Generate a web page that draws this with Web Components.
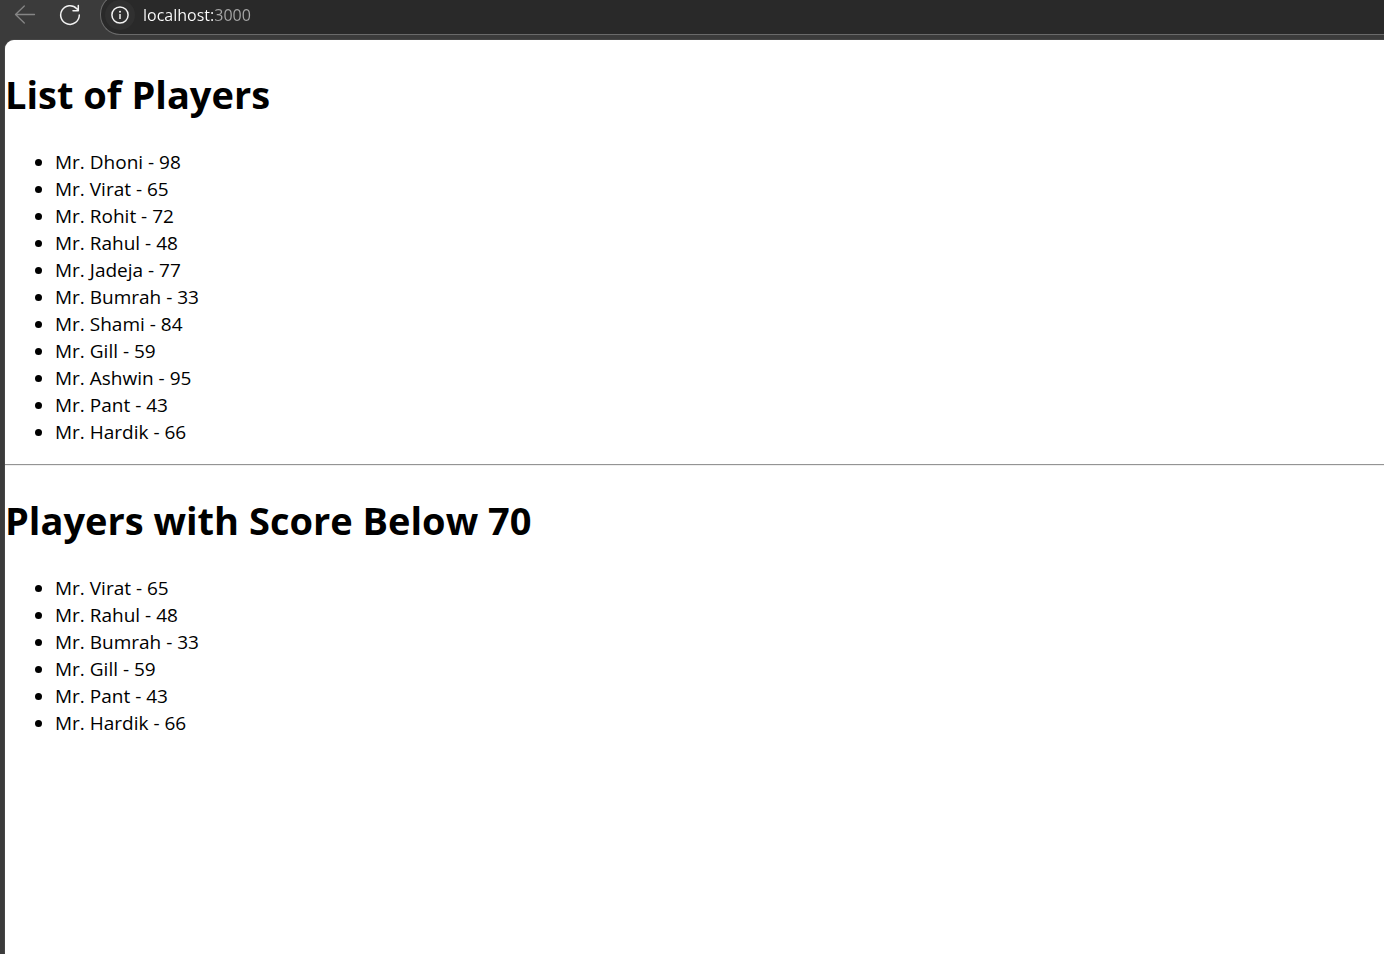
<!DOCTYPE html>
<html lang="en">
<head>
<meta charset="utf-8">
<title>List of Players</title>
<style>
  body { margin: 0; background: #3b3b3b; font-family: "Segoe UI", "Open Sans", "Noto Sans", sans-serif; }
</style>
</head>
<body>
<browser-window>
  <browser-toolbar slot="toolbar"></browser-toolbar>
  <player-list heading="List of Players"></player-list>
  <section-rule></section-rule>
  <player-list heading="Players with Score Below 70" below="70"></player-list>
</browser-window>
<script>
const players = [
  ["Dhoni", 98], ["Virat", 65], ["Rohit", 72], ["Rahul", 48], ["Jadeja", 77], ["Bumrah", 33],
  ["Shami", 84], ["Gill", 59], ["Ashwin", 95], ["Pant", 43], ["Hardik", 66]
];

customElements.define("browser-window", class extends HTMLElement {
  constructor() {
    super();
    this.attachShadow({ mode: "open" }).innerHTML = `
      <style>
        :host { display: flex; flex-direction: column; min-height: 100vh; }
        main { flex: 1; display: flow-root; margin-left: 5px; background: #fff; color: #000;
               border-top-left-radius: 9px; box-shadow: 0 0 1px #aaa; }
      </style>
      <slot name="toolbar"></slot>
      <main><slot></slot></main>`;
  }
});

customElements.define("browser-toolbar", class extends HTMLElement {
  constructor() {
    super();
    this.attachShadow({ mode: "open" }).innerHTML = `
      <style>
        :host { display: flex; height: 40px; overflow: hidden; align-items: flex-start; }
        button { display: grid; place-items: center; flex: none; width: 30px; height: 30px; padding: 0;
                 border: 0; border-radius: 6px; background: none; color: #f2f2f2; }
        button:disabled { color: #858585; }
        nav { display: flex; gap: 15px; padding-left: 10px; }
        svg { display: block; fill: none; stroke: currentColor; }
        form { box-sizing: border-box; display: flex; flex: 1; align-items: center; height: 41px; margin: -6px 0 0 15px;
               padding-left: 4px; border: 1px solid #6a6a6a; border-right: 0;
               border-radius: 20px 0 0 20px; background: #292929; }
        form button { border-radius: 50%; background: #303030; }
        /* The host name is white and the port after it is dimmed. */
        input { flex: 1; min-width: 0; height: 28px; margin: 0; padding: 0 0 0 8px; border: 0; outline: 0;
                font-family: inherit; font-size: 16px;
                background: linear-gradient(90deg, #fff 78px, #a8a8a8 78px);
                -webkit-background-clip: text; background-clip: text; color: #fff;
                -webkit-text-fill-color: transparent; }
      </style>
      <nav aria-label="Navigation">
        <button type="button" aria-label="Back" disabled>
          <svg width="22" height="22" viewBox="0 0 22 22" stroke-width="1.3" stroke-linecap="round" stroke-linejoin="round"><path d="M20.5 10.5H1.5M10.3 2L1.5 10.5L10.3 19"/></svg>
        </button>
        <button type="button" aria-label="Refresh">
          <svg width="22" height="22" viewBox="0 0 22 22" stroke-width="1.5" stroke-linecap="round" stroke-linejoin="round"><path d="M20.3 11A9.3 9.3 0 1 1 17.8 4.7L19.3 6.3M19.3 1.5V6.8H14"/></svg>
        </button>
      </nav>
      <form>
        <button type="button" aria-label="Site information">
          <svg width="18" height="18" viewBox="0 0 18 18" stroke-width="1.5"><circle cx="9" cy="9" r="8.1"/><path d="M9 8V13"/><circle cx="9" cy="5.7" r="1" fill="currentColor" stroke="none"/></svg>
        </button>
        <input type="text" aria-label="Address" value="localhost:3000" spellcheck="false">
      </form>`;
  }
});

customElements.define("section-rule", class extends HTMLElement {
  constructor() {
    super();
    this.attachShadow({ mode: "open" }).innerHTML = `
      <style>
        :host { display: block; }
        hr { margin: 0; border: 0; border-top: 1px solid #949494; border-bottom: 1px solid #efefef; }
      </style>
      <hr>`;
  }
});

customElements.define("player-list", class extends HTMLElement {
  connectedCallback() {
    const limit = Number(this.getAttribute("below") || Infinity);
    const root = this.attachShadow({ mode: "open" });
    root.innerHTML = `
      <style>
        :host { display: flow-root; }
        h1 { margin: 28px 0; font-size: 38px; line-height: 53px; font-weight: 700; }
        ul { margin: 0 0 18px; padding-left: 50px; font-size: 19px; line-height: 27px; }
      </style>
      <h1></h1>
      <ul></ul>`;
    root.querySelector("h1").textContent = this.getAttribute("heading");
    for (const [name, score] of players.filter(p => p[1] < limit)) {
      const item = document.createElement("li");
      item.textContent = `Mr. ${name} - ${score}`;
      root.querySelector("ul").append(item);
    }
  }
});
</script>
</body>
</html>
